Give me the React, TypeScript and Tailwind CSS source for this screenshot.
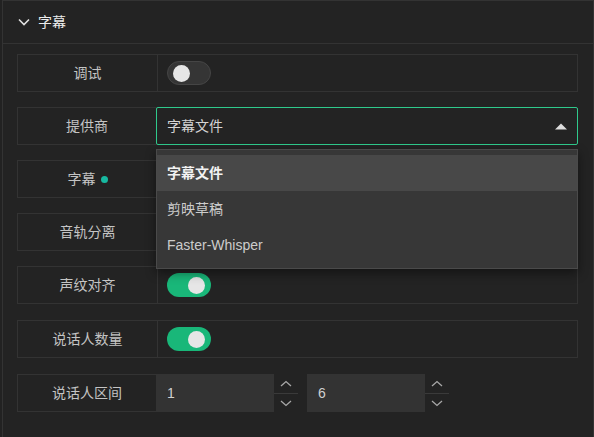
import React from "react";

const font = {
  fontFamily: '"Liberation Sans", "Noto Sans CJK SC", sans-serif',
};

function Toggle({ on }: { on: boolean }) {
  return (
    <div
      className={
        on
          ? "w-[44px] h-[24px] rounded-full bg-[#19b779] flex items-center justify-end px-[6px]"
          : "w-[44px] h-[24px] rounded-full bg-[#353535] border border-[#454545] flex items-center justify-start px-[5px]"
      }
    >
      <div className="w-[17px] h-[17px] rounded-full bg-[#e6e6e6]" />
    </div>
  );
}

function Label({ children, narrow }: { children: React.ReactNode; narrow?: boolean }) {
  return (
    <div
      className={
        narrow
          ? "w-[138px] shrink-0 flex items-center justify-center text-[14px] text-[#c4c4c4]"
          : "w-[139px] shrink-0 flex items-center justify-center text-[14px] text-[#c4c4c4]"
      }
    >
      {children}
    </div>
  );
}

function ToggleRow({ label, on, className }: { label: string; on: boolean; className?: string }) {
  return (
    <div className={"flex h-[38px] border border-[#333333] " + (className ?? "")}>
      <Label>{label}</Label>
      <div className="flex-1 border-l border-[#333333] flex items-center pl-[9px]">
        <Toggle on={on} />
      </div>
    </div>
  );
}

function Spinner() {
  return (
    <div className="w-[24px] flex flex-col">
      <div className="h-[19px] flex items-center justify-center">
        <svg width="12" height="7" viewBox="0 0 12 7" fill="none">
          <path d="M1 6L6 1.5L11 6" stroke="#a8a8a8" strokeWidth="1.3" />
        </svg>
      </div>
      <div className="h-px bg-[#3a3a3a]" />
      <div className="h-[18px] flex items-center justify-center">
        <svg width="12" height="7" viewBox="0 0 12 7" fill="none">
          <path d="M1 1L6 5.5L11 1" stroke="#a8a8a8" strokeWidth="1.3" />
        </svg>
      </div>
    </div>
  );
}

function NumberBox({ value }: { value: string }) {
  return (
    <div className="flex h-[38px]">
      <div className="w-[118px] bg-[#333333] flex items-center pl-[11px] text-[14px] text-[#d0d0d0]">
        {value}
      </div>
      <Spinner />
    </div>
  );
}

export default function App() {
  return (
    <div className="w-[594px] h-[437px] bg-[#222222] overflow-hidden" style={font}>
      <div className="ml-[2px] h-full border-l border-t border-r border-[#333333] bg-[#232323]">
        {/* header */}
        <div className="h-[43px] flex items-center gap-[8px] pl-[15px] border-b border-[#333333]">
          <svg width="12" height="8" viewBox="0 0 12 8" fill="none">
            <path d="M1 1.5L6 6.5L11 1.5" stroke="#e0e0e0" strokeWidth="1.6" />
          </svg>
          <span className="text-[14px] text-[#ececec]">字幕</span>
        </div>

        {/* rows */}
        <div className="flex flex-col gap-[15px] pt-[10px] pl-[14px] pr-[15px]">
          <ToggleRow label="调试" on={false} />

          <div className="relative flex h-[38px]">
            <div className="border border-[#333333] flex">
              <Label narrow>提供商</Label>
            </div>
            <div className="flex-1 -ml-px border border-[#2fc98c] rounded-[2px] flex items-center justify-between pl-[10px] pr-[10px]">
              <span className="text-[14px] text-[#d4d4d4]">字幕文件</span>
              <svg width="12" height="7" viewBox="0 0 12 7">
                <path d="M0 6.5L6 0.5L12 6.5Z" fill="#dcdcdc" />
              </svg>
            </div>

            {/* open menu */}
            <div className="absolute left-[139px] right-0 top-[42px] z-10 bg-[#373737] border border-[#4a4a4a] py-[5px] shadow-[0_4px_10px_rgba(0,0,0,0.45)]">
              <div className="h-[36px] flex items-center pl-[10px] bg-[#484848] text-[14px] font-bold text-[#f2f2f2]">
                字幕文件
              </div>
              <div className="h-[36px] flex items-center pl-[10px] text-[14px] text-[#cccccc]">
                剪映草稿
              </div>
              <div className="h-[36px] flex items-center pl-[10px] text-[14px] text-[#cccccc]">
                Faster-Whisper
              </div>
            </div>
          </div>

          <div className="flex h-[38px] border border-[#333333]">
            <Label>
              <span className="flex items-center gap-[5px]">
                字幕
                <span className="w-[7px] h-[7px] rounded-full bg-[#17b8a0]" />
              </span>
            </Label>
            <div className="flex-1 border-l border-[#333333]" />
          </div>

          <div className="flex h-[38px] border border-[#333333]">
            <Label>音轨分离</Label>
            <div className="flex-1 border-l border-[#333333]" />
          </div>

          <ToggleRow label="声纹对齐" on={true} />
          <ToggleRow label="说话人数量" on={true} className="mt-px" />

          <div className="flex h-[38px] mt-px">
            <div className="border border-[#333333] flex">
              <Label narrow>说话人区间</Label>
            </div>
            <div className="flex -ml-px gap-[9px]">
              <NumberBox value="1" />
              <NumberBox value="6" />
            </div>
          </div>
        </div>
      </div>
    </div>
  );
}
